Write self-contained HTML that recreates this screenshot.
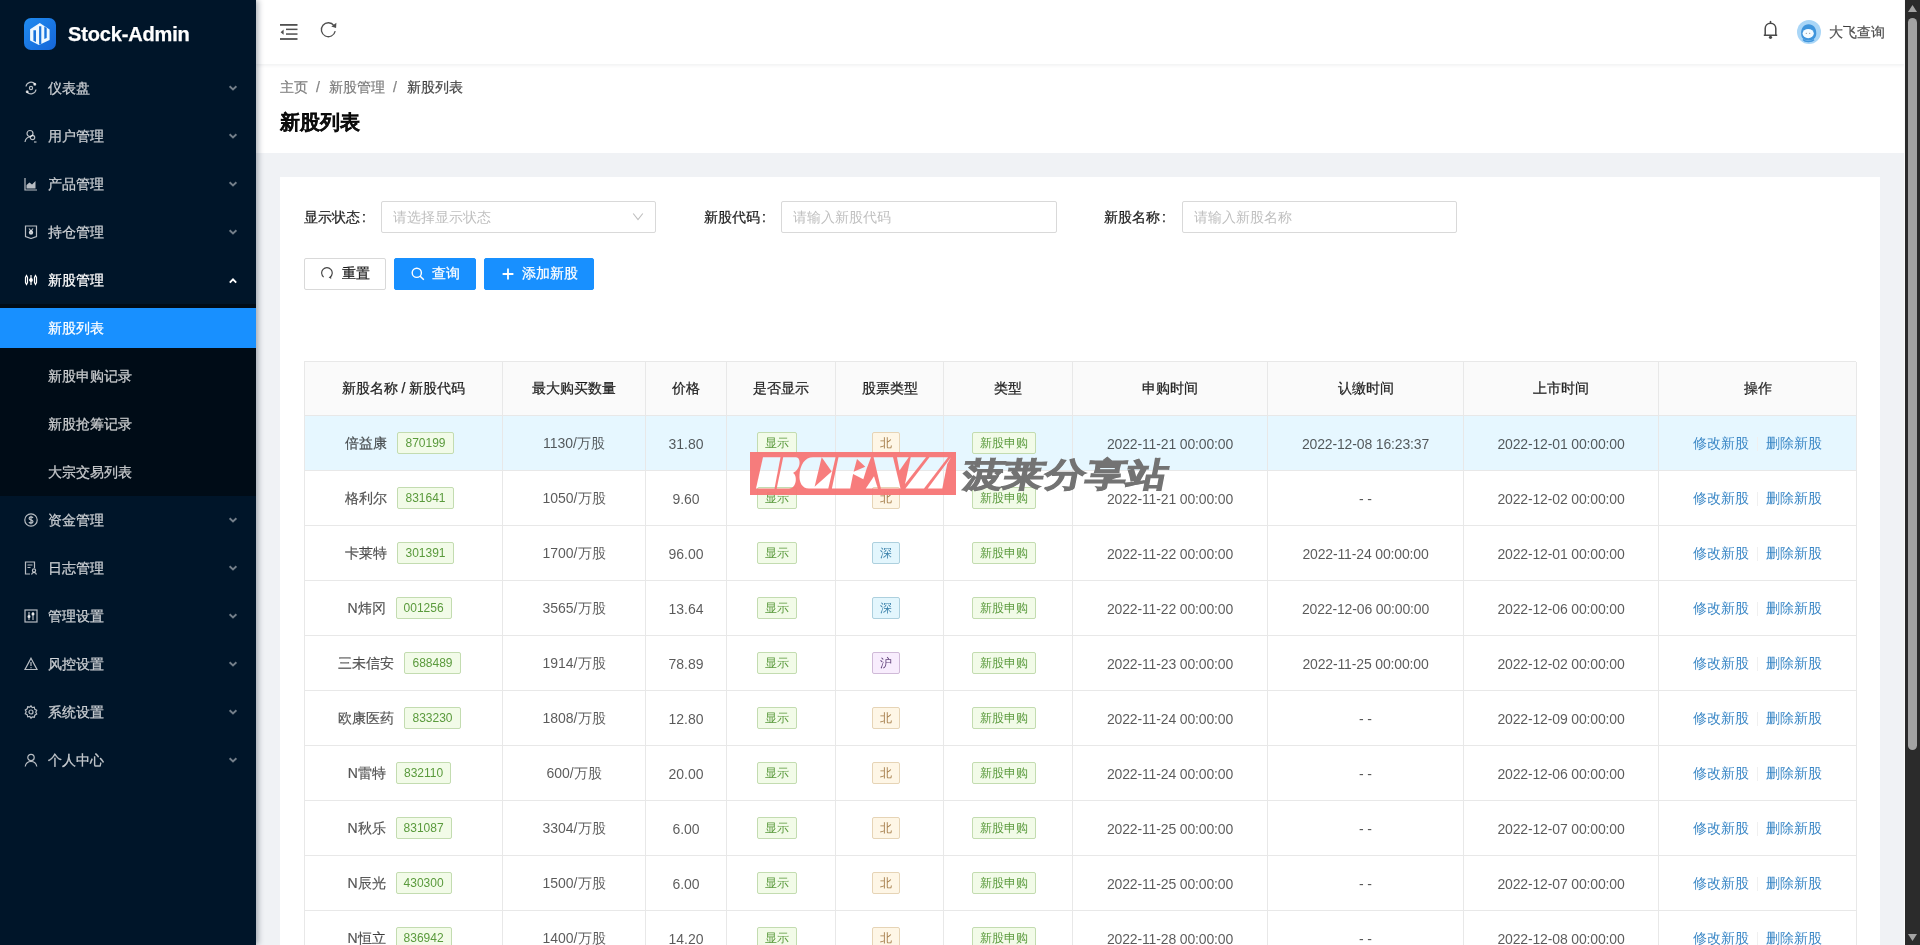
<!DOCTYPE html>
<html><head><meta charset="utf-8"><title>Stock-Admin</title>
<style>
*{box-sizing:border-box;margin:0;padding:0}
html,body{width:1920px;height:945px;overflow:hidden;background:#f0f2f5;font-family:"Liberation Sans",sans-serif;font-size:14px;color:rgba(0,0,0,.85)}
.abs{position:absolute}
#side{position:absolute;left:0;top:0;width:256px;height:945px;background:#001529;z-index:3;box-shadow:2px 0 6px rgba(0,21,41,.35)}
#logo{position:absolute;left:24px;top:18px;width:32px;height:32px;border-radius:7px;background:linear-gradient(135deg,#1f8bf0,#1565d8)}
#brand{position:absolute;left:68px;top:20px;font-size:20px;font-weight:bold;color:#fff;line-height:28px;letter-spacing:-.15px}
.mi{position:absolute;left:0;width:256px;height:40px;line-height:40px;color:rgba(255,255,255,.72);font-weight:500}
.mi.open{color:#fff}
.mi .ico{position:absolute;left:24px;top:13px;width:14px;height:14px;line-height:0}
.mi .mt{position:absolute;left:48px;top:0}
.mi .chev{position:absolute;left:227px;top:14px}
.subbg{position:absolute;left:0;top:304px;width:256px;height:192px;background:#000c17}
.si{position:absolute;left:0;width:256px;height:40px;line-height:40px;padding-left:48px;color:rgba(255,255,255,.72);font-weight:500}
.si.sel{background:#1890ff;color:#fff}
#header{position:absolute;left:256px;top:0;width:1649px;height:64px;background:#fff;box-shadow:0 1px 4px rgba(0,21,41,.08);z-index:2}
#phead{position:absolute;left:256px;top:64px;width:1648px;height:89px;background:#fff}
.bc{position:absolute;top:76px;line-height:22px;color:rgba(0,0,0,.45)}
.bc .sep{margin:0 8px}
.bc.last{color:rgba(0,0,0,.68)}
.ptitle{position:absolute;left:280px;top:108px;font-size:20px;font-weight:bold;line-height:28px;color:rgba(0,0,0,.85);-webkit-text-stroke:.35px rgba(0,0,0,.85)}
#card{position:absolute;left:280px;top:177px;width:1600px;height:800px;background:#fff}
.col{margin-left:2px}
.lbl{position:absolute;top:206px;line-height:22px;color:rgba(0,0,0,.85)}
.inp{position:absolute;top:201px;height:32px;border:1px solid #d9d9d9;border-radius:2px;background:#fff;line-height:30px;padding-left:11px;color:#bfbfbf}
.btn{position:absolute;top:258px;height:32px;border-radius:2px;line-height:30px;font-size:14px}
.btn.def{border:1px solid #d9d9d9;background:#fff;color:rgba(0,0,0,.85)}
.btn.pri{border:1px solid #1890ff;background:#1890ff;color:#fff}
.btn svg{position:absolute}
.btn span{position:absolute;top:-1px}
#table{position:absolute;left:304px;top:361px;width:1552px;height:600px;border-top:1px solid #e8e8e8;border-left:1px solid #e8e8e8}
.th{position:absolute;top:362px;height:54px;background:#fafafa;border-right:1px solid #e8e8e8;border-bottom:1px solid #e8e8e8;text-align:center;line-height:53px;color:rgba(0,0,0,.85)}
.tr{position:absolute;left:305px;width:1551px;height:55px;background:#fff}
.tr.hl{background:#e6f7ff}
.td{position:absolute;top:0;height:55px;border-right:1px solid #e8e8e8;border-bottom:1px solid #e8e8e8;display:flex;align-items:center;justify-content:center;color:rgba(0,0,0,.65);white-space:nowrap;padding-top:1px}
.tag{display:inline-block;height:22px;line-height:20px;padding:0 7px;font-size:12px;border:1px solid;border-radius:2px;margin-right:8px;position:relative;top:-1px}
.nm{vertical-align:middle;margin-right:10px}
.t-gr{color:#5a9a3c;background:#f2fbe8;border-color:#c3dcb0}
.t-or{color:#a47c48;background:#fef6e6;border-color:#e6d4b6}
.t-cy{color:#3a80aa;background:#e3f6fd;border-color:#add0de}
.t-pu{color:#5e3f78;background:#f8edfd;border-color:#d0bad8}
.dt{letter-spacing:-.15px}
.td,.inp{-webkit-text-stroke-width:0}
.td .nm{-webkit-text-stroke-width:.2px}
.lk{color:#3a87c6;text-decoration:none}
.dv{display:inline-block;width:1px;height:14px;background:#f0f0f0;margin:0 8px;vertical-align:middle}
#sb{position:absolute;left:1905px;top:0;width:15px;height:945px;background:#2b2b2b;z-index:5}
#sbthumb{position:absolute;left:3px;top:18px;width:9px;height:732px;border-radius:4.5px;background:#a3a3a3}
#root{position:absolute;left:0;top:0;width:1920px;height:945px;overflow:hidden;will-change:transform;-webkit-text-stroke-width:.25px}
</style></head><body><div id="root">
<div id="side">
  <div id="logo"><svg width="32" height="32" viewBox="0 0 32 32"><path d="M15.8 5.1L25.6 11.6V21.9L14.9 26.9L6.1 22.4V11.2z" fill="#eef8ff"/><path d="M9.4 12.3h2.6v11.6l-2.6-1.2z M15.1 8.3h2.2v17.8l-2.2.3z M20.3 8.6l2.4 1.4v9.9l-2.4 1.2z" fill="#1a74dc"/></svg></div>
  <div id="brand">Stock-Admin</div>
  <div class="mi " style="top:68px"><span class="ico"><svg width="14" height="14" viewBox="0 0 14 14" fill="none" stroke="currentColor" stroke-width="1.2"><circle cx="7" cy="7" r="1.6"/><path d="M2 5.5A5 5 0 0 1 11 3.2M12 8.5A5 5 0 0 1 3 10.8"/><circle cx="10.8" cy="3.2" r=".9" fill="currentColor"/><circle cx="3.2" cy="10.8" r=".9" fill="currentColor"/></svg></span><span class="mt">仪表盘</span><svg class="chev" width="12" height="12" viewBox="0 0 12 12"><path d="M2.6 4.2L6 7.4 9.4 4.2" fill="none" stroke="rgba(255,255,255,.45)" stroke-width="1.9"/></svg></div><div class="mi " style="top:116px"><span class="ico"><svg width="14" height="14" viewBox="0 0 14 14" fill="none" stroke="currentColor" stroke-width="1.2"><circle cx="6" cy="4.5" r="3"/><path d="M1 13c.5-3 2.5-5 5-5"/><circle cx="8.5" cy="8.5" r="2.2"/><path d="M10 13h2.5"/></svg></span><span class="mt">用户管理</span><svg class="chev" width="12" height="12" viewBox="0 0 12 12"><path d="M2.6 4.2L6 7.4 9.4 4.2" fill="none" stroke="rgba(255,255,255,.45)" stroke-width="1.9"/></svg></div><div class="mi " style="top:164px"><span class="ico"><svg width="14" height="14" viewBox="0 0 14 14"><path d="M1 1v12h12" fill="none" stroke="currentColor" stroke-width="1.2"/><path d="M2.5 11.5V8l3-2.5 2.5 2 3.5-3.5v7.5z" fill="currentColor"/></svg></span><span class="mt">产品管理</span><svg class="chev" width="12" height="12" viewBox="0 0 12 12"><path d="M2.6 4.2L6 7.4 9.4 4.2" fill="none" stroke="rgba(255,255,255,.45)" stroke-width="1.9"/></svg></div><div class="mi " style="top:212px"><span class="ico"><svg width="14" height="14" viewBox="0 0 14 14" fill="none" stroke="currentColor" stroke-width="1.2"><path d="M1.5 1h11v10.5L7 13.5 1.5 11.5z"/><circle cx="7" cy="7.5" r="1.6" fill="currentColor"/><path d="M5 3.5l2 2.5 2-2.5"/></svg></span><span class="mt">持仓管理</span><svg class="chev" width="12" height="12" viewBox="0 0 12 12"><path d="M2.6 4.2L6 7.4 9.4 4.2" fill="none" stroke="rgba(255,255,255,.45)" stroke-width="1.9"/></svg></div><div class="mi open" style="top:260px"><span class="ico"><svg width="14" height="14" viewBox="0 0 14 14" fill="none" stroke="currentColor" stroke-width="1.2"><path d="M2.5 2.5l1 2v5l-1 2-1-2v-5z"/><path d="M7 2v10"/><circle cx="7" cy="7" r="1.3" fill="currentColor"/><path d="M11.5 2.5l1 2v5l-1 2-1-2v-5z"/></svg></span><span class="mt">新股管理</span><svg class="chev" width="12" height="12" viewBox="0 0 12 12"><path d="M2.8 8.6L6 5.4 9.2 8.6" fill="none" stroke="#fff" stroke-width="1.9"/></svg></div><div class="subbg"></div><div class="si sel" style="top:308px">新股列表</div><div class="si" style="top:356px">新股申购记录</div><div class="si" style="top:404px">新股抢筹记录</div><div class="si" style="top:452px">大宗交易列表</div><div class="mi " style="top:500px"><span class="ico"><svg width="14" height="14" viewBox="0 0 14 14" fill="none" stroke="currentColor" stroke-width="1.2"><circle cx="7" cy="7" r="6.2"/><path d="M9 4.8c-.4-.6-1.1-.9-2-.9-1.1 0-1.9.6-1.9 1.5 0 1.9 3.9 1.1 3.9 3.1 0 .9-.8 1.6-2 1.6-.9 0-1.7-.4-2.1-1M7 2.8v8.4"/></svg></span><span class="mt">资金管理</span><svg class="chev" width="12" height="12" viewBox="0 0 12 12"><path d="M2.6 4.2L6 7.4 9.4 4.2" fill="none" stroke="rgba(255,255,255,.45)" stroke-width="1.9"/></svg></div><div class="mi " style="top:548px"><span class="ico"><svg width="14" height="14" viewBox="0 0 14 14" fill="none" stroke="currentColor" stroke-width="1.2"><path d="M6 13H1.5V1h9v6"/><path d="M3.5 4h5M3.5 6.5h3"/><circle cx="10" cy="9.5" r="1.6"/><path d="M7.5 13.5c.5-1.5 1.4-2 2.5-2s2 .5 2.5 2"/></svg></span><span class="mt">日志管理</span><svg class="chev" width="12" height="12" viewBox="0 0 12 12"><path d="M2.6 4.2L6 7.4 9.4 4.2" fill="none" stroke="rgba(255,255,255,.45)" stroke-width="1.9"/></svg></div><div class="mi " style="top:596px"><span class="ico"><svg width="14" height="14" viewBox="0 0 14 14" fill="none" stroke="currentColor" stroke-width="1.2"><rect x="1" y="1" width="12" height="12"/><path d="M5 3v8M9 3v8"/><circle cx="5" cy="7.5" r="1" fill="currentColor"/><circle cx="9" cy="5" r="1" fill="currentColor"/></svg></span><span class="mt">管理设置</span><svg class="chev" width="12" height="12" viewBox="0 0 12 12"><path d="M2.6 4.2L6 7.4 9.4 4.2" fill="none" stroke="rgba(255,255,255,.45)" stroke-width="1.9"/></svg></div><div class="mi " style="top:644px"><span class="ico"><svg width="14" height="14" viewBox="0 0 14 14" fill="none" stroke="currentColor" stroke-width="1.2"><path d="M7 1.2L13 12.5H1z"/><path d="M7 5v4M7 10.2v1"/></svg></span><span class="mt">风控设置</span><svg class="chev" width="12" height="12" viewBox="0 0 12 12"><path d="M2.6 4.2L6 7.4 9.4 4.2" fill="none" stroke="rgba(255,255,255,.45)" stroke-width="1.9"/></svg></div><div class="mi " style="top:692px"><span class="ico"><svg width="14" height="14" viewBox="0 0 14 14" fill="none" stroke="currentColor" stroke-width="1.2"><path d="M7 .8l1.2 1.8 2.1-.4.5 2.1 1.9 1-.9 1.9.9 1.9-1.9 1-.5 2.1-2.1-.4L7 13.2l-1.2-1.8-2.1.4-.5-2.1-1.9-1 .9-1.9-.9-1.9 1.9-1 .5-2.1 2.1.4z"/><circle cx="7" cy="7" r="2"/></svg></span><span class="mt">系统设置</span><svg class="chev" width="12" height="12" viewBox="0 0 12 12"><path d="M2.6 4.2L6 7.4 9.4 4.2" fill="none" stroke="rgba(255,255,255,.45)" stroke-width="1.9"/></svg></div><div class="mi " style="top:740px"><span class="ico"><svg width="14" height="14" viewBox="0 0 14 14" fill="none" stroke="currentColor" stroke-width="1.2"><circle cx="7" cy="4.5" r="3.2"/><path d="M1.2 13.5c.6-3 2.9-5 5.8-5s5.2 2 5.8 5"/></svg></span><span class="mt">个人中心</span><svg class="chev" width="12" height="12" viewBox="0 0 12 12"><path d="M2.6 4.2L6 7.4 9.4 4.2" fill="none" stroke="rgba(255,255,255,.45)" stroke-width="1.9"/></svg></div>
</div>
<div id="header">
  <svg class="abs" style="left:24px;top:24px" width="18" height="16" viewBox="0 0 18 16"><g fill="#505050"><rect x="0" y="0" width="17.5" height="1.8"/><rect x="6" y="4.6" width="11.5" height="1.5"/><rect x="6" y="9.3" width="11.5" height="1.5"/><rect x="0" y="14.1" width="17.5" height="1.8"/><path d="M0.6 8.2L3.6 5.6v5.2z"/></g></svg>
  <svg class="abs" style="left:64px;top:21px" width="18" height="18" viewBox="0 0 18 18"><path d="M15.2 10.2A7 7 0 1 1 14 4.6" fill="none" stroke="#505050" stroke-width="1.3"/><path d="M16.4 1.8l-.3 5.2-4.8-1.4z" fill="#505050"/></svg>
  <svg class="abs" style="left:1507px;top:20px" width="15" height="20" viewBox="0 0 15 20"><path d="M2.2 15V8.6C2.2 5.6 4.4 3.2 7.5 3.2s5.3 2.4 5.3 5.4V15M.8 15.3h13.4" fill="none" stroke="#4a4a4a" stroke-width="1.5"/><path d="M7.5.9v2.4" stroke="#4a4a4a" stroke-width="1.5"/><circle cx="7.5" cy="17.3" r="1.6" fill="#4a4a4a"/></svg>
  <svg class="abs" style="left:1541px;top:20px" width="24" height="24" viewBox="0 0 24 24"><circle cx="12" cy="12" r="12" fill="#a9d6f7"/><path d="M4.2 14.5C3.6 8.2 7 4.2 11.6 4.2c4.6 0 8 3.6 7.7 9.6-.3 4.8-3.3 6.6-7.6 6.6-4.2 0-7.1-1.7-7.5-5.9z" fill="#3f95dc"/><ellipse cx="11.2" cy="13.6" rx="5.6" ry="4.6" fill="#f4fbff"/><circle cx="9.3" cy="13.3" r=".55" fill="#777"/><circle cx="12.7" cy="13.3" r=".55" fill="#777"/><path d="M6 19.5c2 2.5 8.5 2.6 11 .2" fill="none" stroke="#3f95dc" stroke-width="1.6"/></svg>
  <div class="abs" style="left:1573px;top:21px;line-height:22px;color:rgba(0,0,0,.65)">大飞查询</div>
</div>
<div id="phead"></div>
<div class="bc" style="left:280px">主页</div><div class="bc" style="left:316px">/</div><div class="bc" style="left:329px">新股管理</div><div class="bc" style="left:393px">/</div><div class="bc last" style="left:407px">新股列表</div>
<div class="ptitle">新股列表</div>
<div id="card"></div>
<div class="lbl" style="left:304px">显示状态<span class="col">:</span></div>
<div class="inp" style="left:381px;width:275px">请选择显示状态</div>
<div class="lbl" style="left:704px">新股代码<span class="col">:</span></div>
<div class="inp" style="left:781px;width:276px">请输入新股代码</div>
<div class="lbl" style="left:1104px">新股名称<span class="col">:</span></div>
<div class="inp" style="left:1182px;width:275px">请输入新股名称</div>
<div class="btn def" style="left:304px;width:82px"><svg style="left:16px;top:8px" width="14" height="14" viewBox="0 0 14 14"><path d="M2.64 10.08A5.3 5.3 0 1 1 9.2 10.1" fill="none" stroke="#444" stroke-width="1.15"/><path d="M7.6 10.2L10.2 8.9 10.2 11.9z" fill="#444"/></svg><span style="left:37px">重置</span></div>
<div class="btn pri" style="left:394px;width:82px"><svg style="left:16px;top:8px" width="14" height="14" viewBox="0 0 14 14"><circle cx="5.8" cy="5.8" r="4.6" fill="none" stroke="#fff" stroke-width="1.4"/><path d="M9.2 9.2l3.6 3.6" stroke="#fff" stroke-width="1.5"/></svg><span style="left:37px">查询</span></div>
<div class="btn pri" style="left:484px;width:110px"><svg style="left:17px;top:8px" width="12" height="14" viewBox="0 0 12 14"><path d="M6 1.5v11M.6 7h10.8" stroke="#fff" stroke-width="1.8"/></svg><span style="left:37px">添加新股</span></div>
<svg class="abs" style="left:632px;top:212px" width="12" height="9" viewBox="0 0 12 9"><path d="M1.2 1.5l4.8 6 4.8-6" fill="none" stroke="#bfbfbf" stroke-width="1.1"/></svg>
<div id="table"></div>
<div class="th" style="left:305px;width:198px">新股名称 / 新股代码</div><div class="th" style="left:503px;width:143px">最大购买数量</div><div class="th" style="left:646px;width:81px">价格</div><div class="th" style="left:727px;width:109px">是否显示</div><div class="th" style="left:836px;width:108px">股票类型</div><div class="th" style="left:944px;width:129px">类型</div><div class="th" style="left:1073px;width:195px">申购时间</div><div class="th" style="left:1268px;width:196px">认缴时间</div><div class="th" style="left:1464px;width:195px">上市时间</div><div class="th" style="left:1659px;width:198px">操作</div><div class="tr hl" style="top:416px"><div class="td" style="left:0px;width:198px"><span class="nm">倍益康</span><span class="tag t-gr code">870199</span></div><div class="td" style="left:198px;width:143px">1130/万股</div><div class="td" style="left:341px;width:81px">31.80</div><div class="td" style="left:422px;width:109px"><span class="tag t-gr">显示</span></div><div class="td" style="left:531px;width:108px"><span class="tag t-or">北</span></div><div class="td" style="left:639px;width:129px"><span class="tag t-gr">新股申购</span></div><div class="td" style="left:768px;width:195px"><span class="dt">2022-11-21 00:00:00</span></div><div class="td" style="left:963px;width:196px"><span class="dt">2022-12-08 16:23:37</span></div><div class="td" style="left:1159px;width:195px"><span class="dt">2022-12-01 00:00:00</span></div><div class="td" style="left:1354px;width:198px"><a class="lk">修改新股</a><span class="dv"></span><a class="lk">删除新股</a></div></div><div class="tr" style="top:471px"><div class="td" style="left:0px;width:198px"><span class="nm">格利尔</span><span class="tag t-gr code">831641</span></div><div class="td" style="left:198px;width:143px">1050/万股</div><div class="td" style="left:341px;width:81px">9.60</div><div class="td" style="left:422px;width:109px"><span class="tag t-gr">显示</span></div><div class="td" style="left:531px;width:108px"><span class="tag t-or">北</span></div><div class="td" style="left:639px;width:129px"><span class="tag t-gr">新股申购</span></div><div class="td" style="left:768px;width:195px"><span class="dt">2022-11-21 00:00:00</span></div><div class="td" style="left:963px;width:196px"><span class="dt">- -</span></div><div class="td" style="left:1159px;width:195px"><span class="dt">2022-12-02 00:00:00</span></div><div class="td" style="left:1354px;width:198px"><a class="lk">修改新股</a><span class="dv"></span><a class="lk">删除新股</a></div></div><div class="tr" style="top:526px"><div class="td" style="left:0px;width:198px"><span class="nm">卡莱特</span><span class="tag t-gr code">301391</span></div><div class="td" style="left:198px;width:143px">1700/万股</div><div class="td" style="left:341px;width:81px">96.00</div><div class="td" style="left:422px;width:109px"><span class="tag t-gr">显示</span></div><div class="td" style="left:531px;width:108px"><span class="tag t-cy">深</span></div><div class="td" style="left:639px;width:129px"><span class="tag t-gr">新股申购</span></div><div class="td" style="left:768px;width:195px"><span class="dt">2022-11-22 00:00:00</span></div><div class="td" style="left:963px;width:196px"><span class="dt">2022-11-24 00:00:00</span></div><div class="td" style="left:1159px;width:195px"><span class="dt">2022-12-01 00:00:00</span></div><div class="td" style="left:1354px;width:198px"><a class="lk">修改新股</a><span class="dv"></span><a class="lk">删除新股</a></div></div><div class="tr" style="top:581px"><div class="td" style="left:0px;width:198px"><span class="nm">N炜冈</span><span class="tag t-gr code">001256</span></div><div class="td" style="left:198px;width:143px">3565/万股</div><div class="td" style="left:341px;width:81px">13.64</div><div class="td" style="left:422px;width:109px"><span class="tag t-gr">显示</span></div><div class="td" style="left:531px;width:108px"><span class="tag t-cy">深</span></div><div class="td" style="left:639px;width:129px"><span class="tag t-gr">新股申购</span></div><div class="td" style="left:768px;width:195px"><span class="dt">2022-11-22 00:00:00</span></div><div class="td" style="left:963px;width:196px"><span class="dt">2022-12-06 00:00:00</span></div><div class="td" style="left:1159px;width:195px"><span class="dt">2022-12-06 00:00:00</span></div><div class="td" style="left:1354px;width:198px"><a class="lk">修改新股</a><span class="dv"></span><a class="lk">删除新股</a></div></div><div class="tr" style="top:636px"><div class="td" style="left:0px;width:198px"><span class="nm">三未信安</span><span class="tag t-gr code">688489</span></div><div class="td" style="left:198px;width:143px">1914/万股</div><div class="td" style="left:341px;width:81px">78.89</div><div class="td" style="left:422px;width:109px"><span class="tag t-gr">显示</span></div><div class="td" style="left:531px;width:108px"><span class="tag t-pu">沪</span></div><div class="td" style="left:639px;width:129px"><span class="tag t-gr">新股申购</span></div><div class="td" style="left:768px;width:195px"><span class="dt">2022-11-23 00:00:00</span></div><div class="td" style="left:963px;width:196px"><span class="dt">2022-11-25 00:00:00</span></div><div class="td" style="left:1159px;width:195px"><span class="dt">2022-12-02 00:00:00</span></div><div class="td" style="left:1354px;width:198px"><a class="lk">修改新股</a><span class="dv"></span><a class="lk">删除新股</a></div></div><div class="tr" style="top:691px"><div class="td" style="left:0px;width:198px"><span class="nm">欧康医药</span><span class="tag t-gr code">833230</span></div><div class="td" style="left:198px;width:143px">1808/万股</div><div class="td" style="left:341px;width:81px">12.80</div><div class="td" style="left:422px;width:109px"><span class="tag t-gr">显示</span></div><div class="td" style="left:531px;width:108px"><span class="tag t-or">北</span></div><div class="td" style="left:639px;width:129px"><span class="tag t-gr">新股申购</span></div><div class="td" style="left:768px;width:195px"><span class="dt">2022-11-24 00:00:00</span></div><div class="td" style="left:963px;width:196px"><span class="dt">- -</span></div><div class="td" style="left:1159px;width:195px"><span class="dt">2022-12-09 00:00:00</span></div><div class="td" style="left:1354px;width:198px"><a class="lk">修改新股</a><span class="dv"></span><a class="lk">删除新股</a></div></div><div class="tr" style="top:746px"><div class="td" style="left:0px;width:198px"><span class="nm">N雷特</span><span class="tag t-gr code">832110</span></div><div class="td" style="left:198px;width:143px">600/万股</div><div class="td" style="left:341px;width:81px">20.00</div><div class="td" style="left:422px;width:109px"><span class="tag t-gr">显示</span></div><div class="td" style="left:531px;width:108px"><span class="tag t-or">北</span></div><div class="td" style="left:639px;width:129px"><span class="tag t-gr">新股申购</span></div><div class="td" style="left:768px;width:195px"><span class="dt">2022-11-24 00:00:00</span></div><div class="td" style="left:963px;width:196px"><span class="dt">- -</span></div><div class="td" style="left:1159px;width:195px"><span class="dt">2022-12-06 00:00:00</span></div><div class="td" style="left:1354px;width:198px"><a class="lk">修改新股</a><span class="dv"></span><a class="lk">删除新股</a></div></div><div class="tr" style="top:801px"><div class="td" style="left:0px;width:198px"><span class="nm">N秋乐</span><span class="tag t-gr code">831087</span></div><div class="td" style="left:198px;width:143px">3304/万股</div><div class="td" style="left:341px;width:81px">6.00</div><div class="td" style="left:422px;width:109px"><span class="tag t-gr">显示</span></div><div class="td" style="left:531px;width:108px"><span class="tag t-or">北</span></div><div class="td" style="left:639px;width:129px"><span class="tag t-gr">新股申购</span></div><div class="td" style="left:768px;width:195px"><span class="dt">2022-11-25 00:00:00</span></div><div class="td" style="left:963px;width:196px"><span class="dt">- -</span></div><div class="td" style="left:1159px;width:195px"><span class="dt">2022-12-07 00:00:00</span></div><div class="td" style="left:1354px;width:198px"><a class="lk">修改新股</a><span class="dv"></span><a class="lk">删除新股</a></div></div><div class="tr" style="top:856px"><div class="td" style="left:0px;width:198px"><span class="nm">N辰光</span><span class="tag t-gr code">430300</span></div><div class="td" style="left:198px;width:143px">1500/万股</div><div class="td" style="left:341px;width:81px">6.00</div><div class="td" style="left:422px;width:109px"><span class="tag t-gr">显示</span></div><div class="td" style="left:531px;width:108px"><span class="tag t-or">北</span></div><div class="td" style="left:639px;width:129px"><span class="tag t-gr">新股申购</span></div><div class="td" style="left:768px;width:195px"><span class="dt">2022-11-25 00:00:00</span></div><div class="td" style="left:963px;width:196px"><span class="dt">- -</span></div><div class="td" style="left:1159px;width:195px"><span class="dt">2022-12-07 00:00:00</span></div><div class="td" style="left:1354px;width:198px"><a class="lk">修改新股</a><span class="dv"></span><a class="lk">删除新股</a></div></div><div class="tr" style="top:911px"><div class="td" style="left:0px;width:198px"><span class="nm">N恒立</span><span class="tag t-gr code">836942</span></div><div class="td" style="left:198px;width:143px">1400/万股</div><div class="td" style="left:341px;width:81px">14.20</div><div class="td" style="left:422px;width:109px"><span class="tag t-gr">显示</span></div><div class="td" style="left:531px;width:108px"><span class="tag t-or">北</span></div><div class="td" style="left:639px;width:129px"><span class="tag t-gr">新股申购</span></div><div class="td" style="left:768px;width:195px"><span class="dt">2022-11-28 00:00:00</span></div><div class="td" style="left:963px;width:196px"><span class="dt">- -</span></div><div class="td" style="left:1159px;width:195px"><span class="dt">2022-12-08 00:00:00</span></div><div class="td" style="left:1354px;width:198px"><a class="lk">修改新股</a><span class="dv"></span><a class="lk">删除新股</a></div></div>
<svg class="abs" style="left:750px;top:452px;z-index:4" width="206" height="43" viewBox="0 0 206 43">
<defs><mask id="wmm"><rect x="0" y="0" width="206" height="43" fill="#fff"/><g fill="#000">
<path d="M6 36.5L24.5 36.5L30.5 5.3L13 5.3z"/>
<path d="M26.7 36.5L33.2 5.3L46 5.3C51 5.3 51.5 17 43 21C47.5 23 47 36.5 39 36.5z"/>
<path d="M63 5.3L85.6 5.3L78.3 36.5L59 36.5C52 36.5 49 30 49.5 23C50 13 55 5.3 63 5.3z"/>
<path d="M88.5 5.3L121 5.3L116.8 16.2L113.3 27.2L103.1 21.9L100.2 36.5L81.9 36.5z"/>
<path d="M115.8 36.5L124 24.3L127.9 36.5z"/>
<path d="M123.6 5.3L143 5.3L150.5 36.5L130.9 36.5z"/>
<path d="M147 5.3L158.7 5.3L149.5 18.4z"/>
<path d="M160.7 5.3L176 5.3L155 32z"/>
<path d="M179.5 5.3L198 5.3L174 36.5L155.5 36.5z"/>
<path d="M201 5.3L197.2 12.1L192.3 36.5L177.8 36.5z"/>
</g></mask></defs>
<rect x="0" y="0" width="206" height="43" fill="#f77676" mask="url(#wmm)" opacity=".95"/>
<path d="M71.7 5.3L81.7 19.4L64.6 34.7z M107 7L115.3 14.8L103.6 19.7z" fill="#f77676" opacity=".95"/>
</svg>
<div class="abs" style="left:967px;top:456px;z-index:4;font-size:33px;font-weight:bold;line-height:38px;color:#737373;-webkit-text-stroke:1px #737373;transform-origin:0 0;transform:scaleX(1.24) skewX(-9deg);white-space:nowrap">菠莱分享站</div>
<div class="abs" style="left:1904px;top:0;width:1px;height:945px;background:#fafafa;z-index:5"></div>
<div id="sb"><div id="sbthumb"></div><svg class="abs" style="left:3px;top:5px" width="9" height="7"><path d="M4.5 0L9 7H0z" fill="#a3a3a3"/></svg><svg class="abs" style="left:3px;top:934px" width="9" height="7"><path d="M0 0h9L4.5 7z" fill="#a3a3a3"/></svg></div>
</div></body></html>
